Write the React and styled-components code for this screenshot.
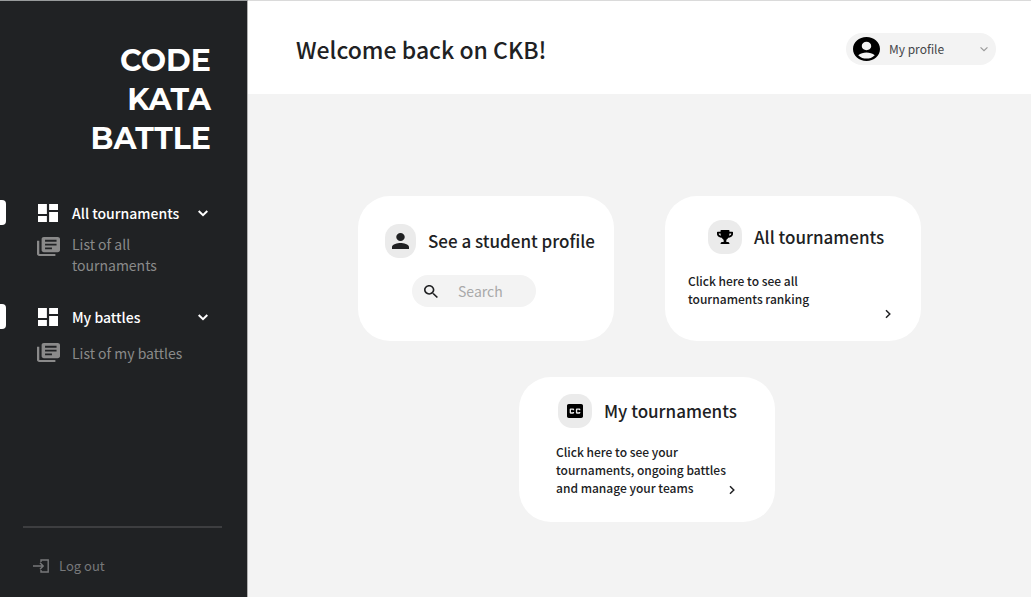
import React from 'react';
import styled, { createGlobalStyle } from 'styled-components';
import { FaTrophy } from 'react-icons/fa';

const GlobalStyle = createGlobalStyle`
  *, *::before, *::after { box-sizing: border-box; }
  body {
    margin: 0;
    background: #f3f3f3;
    color: #202123;
    font-family: 'Noto Sans CJK SC', 'Noto Sans', sans-serif;
  }
  h1, h2, p { margin: 0; }
  button, input { font: inherit; color: inherit; border: 0; background: none; padding: 0; }
  button { cursor: pointer; }
  a { color: inherit; text-decoration: none; }
  svg { display: block; flex: none; }
`;

const Page = styled.div`
  display: flex;
  min-height: 100vh;
  border-top: 1px solid #dadada;
`;

const Sidebar = styled.aside`
  display: flex;
  flex-direction: column;
  flex: none;
  width: 248px;
  margin-top: -1px;
  background: #202224;
  border-top: 1px solid #989b9c;
  border-right: 1px solid #b0b0b0;
`;

const Logo = styled.div`
  padding: 40px 36px 0 0;
  color: #fff;
  font: 700 30px/39px Montserrat, Inter, sans-serif;
  text-align: right;
`;

const Nav = styled.nav`
  display: flex;
  flex-direction: column;
  gap: 28px;
  padding-top: 42px;
`;

const NavGroup = styled.section`
  display: flex;
  flex-direction: column;
  gap: ${(p) => p.$gap}px;
`;

const NavToggle = styled.button`
  display: flex;
  align-items: center;
  height: 26px;
  padding-right: 39px;
  color: #fff;
  font-size: 14px;
  font-weight: 500;
  line-height: 26px;
  text-align: left;

  &::before {
    content: '';
    align-self: flex-start;
    width: 6px;
    height: 25px;
    margin-right: 32px;
    border-radius: 0 4px 4px 0;
    background: #fff;
  }
`;

const NavLabel = styled.span`
  flex: 1;
  padding-left: 14px;
`;

const NavLink = styled.a`
  display: flex;
  align-items: flex-start;
  gap: 12px;
  padding: 0 60px 0 37px;
  color: #8a8a8a;
  font-size: 14px;
  line-height: 21px;

  svg { margin-top: ${(p) => p.$iconDrop || 0}px; }
`;

const SidebarFooter = styled.footer`
  margin: auto 25px 21px 23px;
  padding: 28px 10px 0;
  border-top: 2px solid #3d3e40;
`;

const LogoutButton = styled.button`
  display: flex;
  align-items: center;
  gap: 10px;
  color: #77787a;
  font-size: 13px;
  line-height: 20px;
`;

const Main = styled.main`
  flex: 1;
  min-width: 0;
`;

const Header = styled.header`
  display: flex;
  align-items: center;
  justify-content: space-between;
  height: 93px;
  padding: 2px 35px 0 48px;
  background: #fff;
`;

const Title = styled.h1`
  font-size: 23px;
  font-weight: 500;
  line-height: 32px;
`;

const ProfileButton = styled.button`
  display: flex;
  align-items: center;
  gap: 9px;
  width: 150px;
  height: 32px;
  padding: 0 8px 0 7px;
  border-radius: 16px;
  background: #f3f3f3;
  color: #44464a;
  font-size: 12px;
  text-align: left;

  span { flex: 1; }
  > :last-child { color: #9a9a9a; }
`;

const Board = styled.div`
  display: flex;
  flex-direction: column;
  gap: 36px;
  padding: 102px 20px 40px;
`;

const CardRow = styled.div`
  display: flex;
  flex-wrap: wrap;
  justify-content: center;
  gap: 36px 51px;
  padding-left: ${(p) => p.$indent || 0}px;
`;

const Card = styled.section`
  width: 256px;
  min-height: 145px;
  padding: ${(p) => p.$padding};
  border-radius: 32px;
  background: #fff;
`;

const CardLink = styled(Card).attrs({ as: 'a', href: '#' })``;

const CardHead = styled.div`
  display: flex;
  align-items: center;
  gap: 12px;
  padding-left: ${(p) => p.$indent || 0}px;
`;

const IconBadge = styled.span`
  display: grid;
  place-items: center;
  flex: none;
  width: ${(p) => (p.$narrow ? 31 : 34)}px;
  height: 34px;
  border-radius: 14px;
  background: #ebebeb;
  color: #000;
`;

const CardTitle = styled.h2`
  font-size: 17px;
  font-weight: 500;
  line-height: 24px;
  white-space: nowrap;
`;

const CardBody = styled.div`
  display: flex;
  align-items: flex-end;
  min-height: 49px;
  margin-top: ${(p) => p.$top}px;
`;

const CardText = styled.p`
  flex: none;
  align-self: flex-start;
  width: ${(p) => p.$width}px;
  font-size: 12px;
  font-weight: 500;
  line-height: 18px;
  white-space: nowrap;
`;

const SearchBox = styled.label`
  display: flex;
  align-items: center;
  gap: 20px;
  width: 124px;
  height: 32px;
  margin: 17px 0 0 27px;
  padding: 0 12px;
  border-radius: 16px;
  background: #f3f3f3;
`;

const SearchInput = styled.input`
  flex: 1;
  min-width: 0;
  outline: none;
  font-size: 14px;
  line-height: 20px;

  &::placeholder { color: #a9a9a9; opacity: 1; }
`;

const DashboardIcon = () => (
  <svg width="20" height="18" viewBox="3 3 18 18" preserveAspectRatio="none" fill="currentColor">
    <path d="M3 13h8V3H3v10zm0 8h8v-6H3v6zm10 0h8V11h-8v10zm0-18v6h8V3h-8z" />
  </svg>
);

const ListIcon = () => (
  <svg width="23" height="19" viewBox="2 2 20 20" preserveAspectRatio="none" fill="currentColor">
    <path d="M4 6H2v14c0 1.100.9 2 2 2h14v-2H4V6zm16-4H8c-1.100 0-2 .9-2 2v12c0 1.100.9 2 2 2h12c1.100 0 2-.9 2-2V4c0-1.100-.9-2-2-2zm-1 9H9V9h10v2zm-4 4H9v-2h6v2zm4-8H9V5h10v2z" />
  </svg>
);

const ChevronDown = ({ size = 10, width = 2 }) => (
  <svg width={size} height={size} viewBox="0 0 10 10" fill="none" stroke="currentColor" strokeWidth={width}>
    <path d="M.7 3 5 7.200 9.300 3" />
  </svg>
);

const ChevronRight = () => (
  <svg width="8" height="14" viewBox="0 0 8 14" fill="none" stroke="currentColor" strokeWidth="1.500">
    <path d="M2 3.200 5.800 7 2 10.800" />
  </svg>
);

const LogoutIcon = () => (
  <svg width="16" height="14" viewBox="0 0 16 14" fill="none" stroke="currentColor" strokeWidth="1.400">
    <path d="M0 7h10M7 3.800 10.200 7 7 10.200M8 3V1h7.200v12H8v-2" />
  </svg>
);

const AccountIcon = () => (
  <svg width="27" height="24" viewBox="2 2 20 20" preserveAspectRatio="none" fill="#000">
    <path d="M12 2C6.480 2 2 6.480 2 12s4.480 10 10 10 10-4.480 10-10S17.520 2 12 2zm0 4c1.930 0 3.500 1.570 3.500 3.500S13.930 13 12 13s-3.500-1.570-3.500-3.500S10.070 6 12 6zm0 14c-2.030 0-4.430-.820-6.140-2.880C7.550 15.800 9.680 15 12 15s4.450.800 6.140 2.120C16.430 19.180 14.030 20 12 20z" />
  </svg>
);

const PersonIcon = () => (
  <svg width="17" height="16" viewBox="4 4 16 16" preserveAspectRatio="none" fill="#202123">
    <path d="M12 12c2.210 0 4-1.790 4-4s-1.790-4-4-4-4 1.790-4 4 1.790 4 4 4zm0 2c-2.670 0-8 1.340-8 4v2h16v-2c0-2.660-5.330-4-8-4z" />
  </svg>
);

const SearchIcon = () => (
  <svg width="14" height="13" viewBox="3 3 17.500 17.500" preserveAspectRatio="none" fill="#202123">
    <path d="M15.500 14h-.790l-.280-.270C15.410 12.590 16 11.110 16 9.500 16 5.910 13.090 3 9.500 3S3 5.910 3 9.500 5.910 16 9.500 16c1.610 0 3.090-.590 4.230-1.570l.270.280v.790l5 4.990L20.490 19l-4.990-5zm-6 0C7.010 14 5 11.990 5 9.500S7.010 5 9.500 5 14 7.010 14 9.500 11.990 14 9.500 14z" />
  </svg>
);

const CaptionIcon = () => (
  <svg width="16" height="14" viewBox="3 4 18 16" preserveAspectRatio="none" fill="#000">
    <path d="M19 4H5c-1.110 0-2 .9-2 2v12c0 1.100.89 2 2 2h14c1.100 0 2-.9 2-2V6c0-1.100-.9-2-2-2zm-8 7H9.500v-.5h-2v3h2V13H11v1c0 .55-.45 1-1 1H7c-.55 0-1-.45-1-1v-4c0-.55.45-1 1-1h3c.55 0 1 .45 1 1v1zm7 0h-1.500v-.5h-2v3h2V13H18v1c0 .55-.45 1-1 1h-3c-.55 0-1-.45-1-1v-4c0-.55.45-1 1-1h3c.55 0 1 .45 1 1v1z" />
  </svg>
);

export default function App() {
  return (
    <>
      <GlobalStyle />
      <Page>
        <Sidebar>
          <Logo>CODE<br />KATA<br />BATTLE</Logo>
          <Nav>
            <NavGroup $gap={8}>
              <NavToggle>
                <DashboardIcon />
                <NavLabel>All tournaments</NavLabel>
                <ChevronDown />
              </NavToggle>
              <NavLink href="#" $iconDrop={3}>
                <ListIcon />
                List of all tournaments
              </NavLink>
            </NavGroup>
            <NavGroup $gap={13}>
              <NavToggle>
                <DashboardIcon />
                <NavLabel>My battles</NavLabel>
                <ChevronDown />
              </NavToggle>
              <NavLink href="#">
                <ListIcon />
                List of my battles
              </NavLink>
            </NavGroup>
          </Nav>
          <SidebarFooter>
            <LogoutButton>
              <LogoutIcon />
              Log out
            </LogoutButton>
          </SidebarFooter>
        </Sidebar>
        <Main>
          <Header>
            <Title>Welcome back on CKB!</Title>
            <ProfileButton>
              <AccountIcon />
              <span>My profile</span>
              <ChevronDown size={8} width={1.5} />
            </ProfileButton>
          </Header>
          <Board>
            <CardRow>
              <Card $padding="28px 20px 20px 27px">
                <CardHead>
                  <IconBadge $narrow><PersonIcon /></IconBadge>
                  <CardTitle>See a student profile</CardTitle>
                </CardHead>
                <SearchBox>
                  <SearchIcon />
                  <SearchInput type="text" placeholder="Search" aria-label="Search" />
                </SearchBox>
              </Card>
              <CardLink $padding="24px 20px 20px 23px">
                <CardHead $indent={20}>
                  <IconBadge><FaTrophy size={16} /></IconBadge>
                  <CardTitle>All tournaments</CardTitle>
                </CardHead>
                <CardBody $top={18}>
                  <CardText $width={196}>Click here to see all<br />tournaments ranking</CardText>
                  <ChevronRight />
                </CardBody>
              </CardLink>
            </CardRow>
            <CardRow $indent={15}>
              <CardLink $padding="17px 20px 20px 37px">
                <CardHead $indent={2}>
                  <IconBadge><CaptionIcon /></IconBadge>
                  <CardTitle>My tournaments</CardTitle>
                </CardHead>
                <CardBody $top={15}>
                  <CardText $width={172}>
                    Click here to see your<br />tournaments, ongoing battles<br />and manage your teams
                  </CardText>
                  <ChevronRight />
                </CardBody>
              </CardLink>
            </CardRow>
          </Board>
        </Main>
      </Page>
    </>
  );
}
